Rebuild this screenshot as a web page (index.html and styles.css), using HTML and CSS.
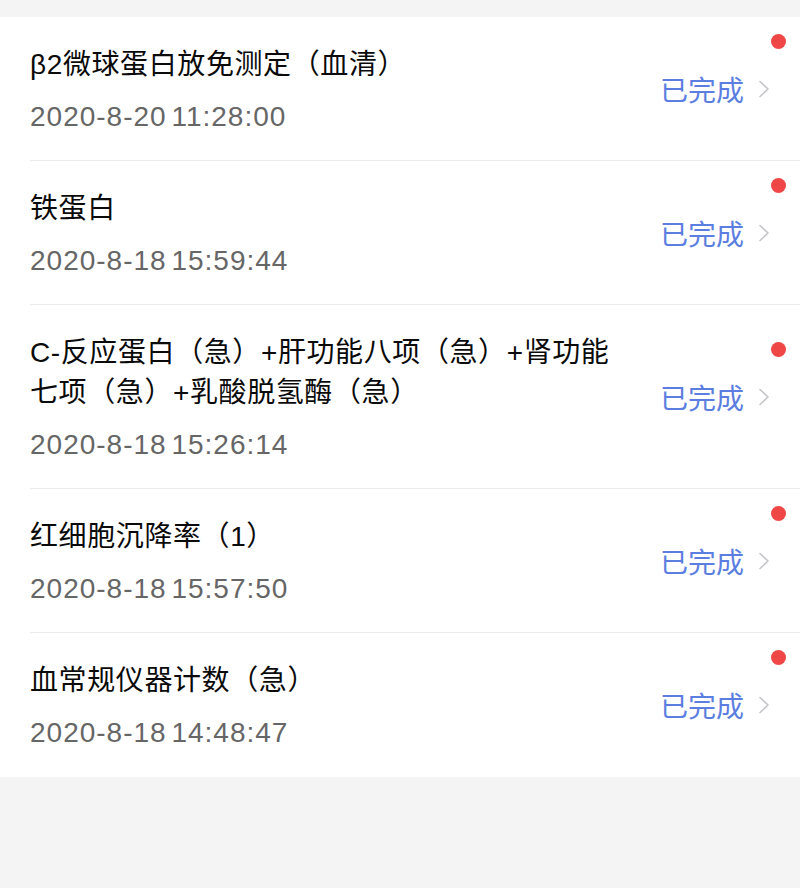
FILE: index.html
```html
<!DOCTYPE html>
<html lang="zh-CN">
<head>
<meta charset="utf-8">
<link rel="stylesheet" href="styles.css">
</head>
<body>
<div class="list">
  <div class="item">
    <div class="main">
      <div class="title">β2微球蛋白放免测定（血清）</div>
      <div class="date">2020-8-20 11:28:00</div>
    </div>
    <div class="side">
      <span class="dot"></span>
      <span class="status">已完成</span>
      <svg class="chev" width="12" height="18" viewBox="0 0 12 18"><path d="M2 1.5 L10 9 L2 16.5" fill="none" stroke="#c4c4c8" stroke-width="1.6" stroke-linecap="round" stroke-linejoin="round"/></svg>
    </div>
  </div>
  <div class="item">
    <div class="main">
      <div class="title">铁蛋白</div>
      <div class="date">2020-8-18 15:59:44</div>
    </div>
    <div class="side">
      <span class="dot"></span>
      <span class="status">已完成</span>
      <svg class="chev" width="12" height="18" viewBox="0 0 12 18"><path d="M2 1.5 L10 9 L2 16.5" fill="none" stroke="#c4c4c8" stroke-width="1.6" stroke-linecap="round" stroke-linejoin="round"/></svg>
    </div>
  </div>
  <div class="item">
    <div class="main">
      <div class="title">C-反应蛋白（急）+肝功能八项（急）+肾功能<br>七项（急）+乳酸脱氢酶（急）</div>
      <div class="date">2020-8-18 15:26:14</div>
    </div>
    <div class="side">
      <span class="dot"></span>
      <span class="status">已完成</span>
      <svg class="chev" width="12" height="18" viewBox="0 0 12 18"><path d="M2 1.5 L10 9 L2 16.5" fill="none" stroke="#c4c4c8" stroke-width="1.6" stroke-linecap="round" stroke-linejoin="round"/></svg>
    </div>
  </div>
  <div class="item">
    <div class="main">
      <div class="title">红细胞沉降率（1）</div>
      <div class="date">2020-8-18 15:57:50</div>
    </div>
    <div class="side">
      <span class="dot"></span>
      <span class="status">已完成</span>
      <svg class="chev" width="12" height="18" viewBox="0 0 12 18"><path d="M2 1.5 L10 9 L2 16.5" fill="none" stroke="#c4c4c8" stroke-width="1.6" stroke-linecap="round" stroke-linejoin="round"/></svg>
    </div>
  </div>
  <div class="item last">
    <div class="main">
      <div class="title">血常规仪器计数（急）</div>
      <div class="date">2020-8-18 14:48:47</div>
    </div>
    <div class="side">
      <span class="dot"></span>
      <span class="status">已完成</span>
      <svg class="chev" width="12" height="18" viewBox="0 0 12 18"><path d="M2 1.5 L10 9 L2 16.5" fill="none" stroke="#c4c4c8" stroke-width="1.6" stroke-linecap="round" stroke-linejoin="round"/></svg>
    </div>
  </div>
</div>
</body>
</html>
```
FILE: styles.css
```css
html, body {
  margin: 0;
  padding: 0;
  background: #f4f4f4;
  font-family: "Liberation Sans", "Noto Sans CJK SC", sans-serif;
}
.list {
  margin-top: 17px;
  background: #ffffff;
  padding-left: 30px;
}
.item {
  display: flex;
  align-items: center;
  padding: 28px 30px 23px 0;
  border-bottom: 1px solid #ebebeb;
}
.item.last {
  border-bottom: none;
  padding-bottom: 24px;
}
.main {
  flex: 1;
  min-width: 0;
}
.title {
  font-size: 28px;
  line-height: 40px;
  color: #0a0a0a;
  letter-spacing: 0.6px;
}
.date {
  margin-top: 12px;
  font-size: 28px;
  line-height: 40px;
  color: #666666;
  letter-spacing: 1px;
  word-spacing: -4px;
}
.side {
  position: relative;
  display: flex;
  align-items: center;
  height: 40px;
  margin-top: -4px;
}
.status {
  font-size: 28px;
  line-height: 40px;
  color: #5b7ee0;
  font-family: "Noto Sans CJK SC", sans-serif;
}
.chev {
  margin-left: 14px;
  display: block;
}
.dot {
  position: absolute;
  right: -16px;
  top: -35px;
  width: 15px;
  height: 15px;
  border-radius: 50%;
  background: #ef4646;
}
```
